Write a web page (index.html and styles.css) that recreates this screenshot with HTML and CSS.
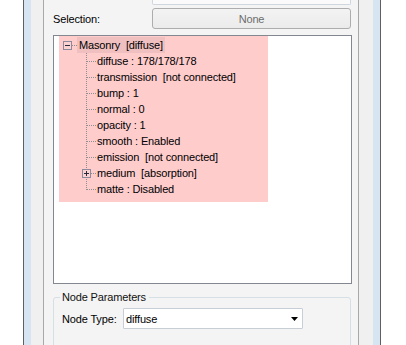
FILE: index.html
```html
<!DOCTYPE html>
<html>
<head>
<meta charset="utf-8">
<link rel="stylesheet" href="styles.css">
</head>
<body>
<div class="frame">
  <div class="rim">
    <div class="side">
      <div class="panel">
        <div class="topbox"></div>
        <div class="sel-row">
          <span class="sel-label">Selection:</span>
          <div class="btn">None</div>
        </div>
        <div class="tree">
          <div class="pink">
            <div class="row root">
              <svg class="exp" width="9" height="9" viewBox="0 0 9 9"><rect x="0.5" y="0.5" width="8" height="8" fill="#fbd2d2" stroke="#8d8a9c"/><rect x="2" y="4" width="5" height="1" fill="#2a2a3a"/></svg>
              <span class="hdots"></span>
              <span class="lbl hl">Masonry  [diffuse]</span>
            </div>
            <div class="row child"><span class="conn"></span><span class="lbl">diffuse : 178/178/178</span></div>
            <div class="row child"><span class="conn"></span><span class="lbl">transmission  [not connected]</span></div>
            <div class="row child"><span class="conn"></span><span class="lbl">bump : 1</span></div>
            <div class="row child"><span class="conn"></span><span class="lbl">normal : 0</span></div>
            <div class="row child"><span class="conn"></span><span class="lbl">opacity : 1</span></div>
            <div class="row child"><span class="conn"></span><span class="lbl">smooth : Enabled</span></div>
            <div class="row child"><span class="conn"></span><span class="lbl">emission  [not connected]</span></div>
            <div class="row child"><span class="conn"><svg class="exp" width="9" height="9" viewBox="0 0 9 9"><rect x="0.5" y="0.5" width="8" height="8" fill="#fbd2d2" stroke="#8d8a9c"/><rect x="2" y="4" width="5" height="1" fill="#2a2a3a"/><rect x="4" y="2" width="1" height="5" fill="#2a2a3a"/></svg></span><span class="lbl">medium  [absorption]</span></div>
            <div class="row child last"><span class="conn"></span><span class="lbl">matte : Disabled</span></div>
          </div>
        </div>
        <fieldset class="group">
          <legend>Node Parameters</legend>
          <div class="field">
            <span class="flabel">Node Type:</span>
            <div class="combo">
              <span class="cval">diffuse</span>
              <svg class="arrow" width="7" height="4" viewBox="0 0 7 4"><polygon points="0,0 7,0 3.5,4" fill="#000"/></svg>
            </div>
          </div>
        </fieldset>
      </div>
    </div>
  </div>
</div>
</body>
</html>
```

FILE: styles.css
```css
html, body {
  margin: 0;
  height: 345px;
  overflow: hidden;
  background: #ffffff;
}

body {
  font-family: "Liberation Sans", Arial, sans-serif;
  font-size: 11px;
  letter-spacing: -0.15px;
  color: #000;
}

.frame {
  margin-left: 23px;
  width: 358px;
  height: 345px;
  box-sizing: border-box;
  border-left: 1px solid #5f5f5f;
  border-right: 1px solid #5f5f5f;
}

.rim {
  height: 100%;
  padding: 0 7px;
  background: #d7e4f2;
}

.side {
  height: 100%;
  background: #f0f0f0;
  padding: 0 14px 0 12px;
}

.panel {
  height: 100%;
  box-sizing: border-box;
  border-left: 1px solid #a9a9a9;
  border-right: 1px solid #a9a9a9;
  background: #f4f4f4;
  padding: 0 6px 0 9px;
  display: flex;
  flex-direction: column;
  overflow: hidden;
}

.topbox {
  flex: none;
  margin-left: 99px;
  width: 199px;
  height: 5px;
  box-sizing: border-box;
  border: 1px solid #cfd6de;
  border-top: 0;
  border-radius: 0 0 2px 2px;
  background: #fafafa;
}

.sel-row {
  flex: none;
  display: flex;
  align-items: center;
  margin-top: 3px;
  height: 21px;
}

.sel-label {
  width: 99px;
  flex: none;
}

.btn {
  width: 199px;
  height: 21px;
  box-sizing: border-box;
  border: 1px solid #adadad;
  border-radius: 3px;
  background: linear-gradient(#f3f3f3, #ebebeb);
  color: #6d6d6d;
  display: flex;
  align-items: center;
  justify-content: center;
}

.tree {
  flex: none;
  margin-top: 6px;
  width: 299px;
  height: 249px;
  box-sizing: border-box;
  border: 1px solid #828790;
  background: #fff;
}

.pink {
  margin-left: 5px;
  width: 209px;
  padding: 1px 0 5px;
  background: #ffcccc;
}

.row {
  height: 16px;
  display: flex;
  align-items: center;
  white-space: pre;
}

.root {
  padding-left: 4px;
}

.exp {
  flex: none;
  display: block;
}

.hdots {
  flex: none;
  width: 5px;
  height: 1px;
  background: repeating-linear-gradient(to right, #8f8f8f 0 1px, transparent 1px 2px);
}

.lbl {
  line-height: 16px;
}

.hl {
  padding: 0 2px;
  background: #f0c0c0;
}

.child {
  padding-left: 23px;
}

.conn {
  flex: none;
  width: 15px;
  height: 16px;
  display: flex;
  align-items: center;
  background:
    repeating-linear-gradient(to bottom, #8f8f8f 0 1px, transparent 1px 2px) 4px 0 / 1px 16px no-repeat,
    repeating-linear-gradient(to right, #8f8f8f 0 1px, transparent 1px 2px) 5px 8px / 9px 1px no-repeat;
}

.last .conn {
  background:
    repeating-linear-gradient(to bottom, #8f8f8f 0 1px, transparent 1px 2px) 4px 0 / 1px 9px no-repeat,
    repeating-linear-gradient(to right, #8f8f8f 0 1px, transparent 1px 2px) 5px 8px / 9px 1px no-repeat;
}

.group {
  flex: none;
  margin: 7px 0 0 0;
  padding: 0 6px;
  width: 298px;
  height: 70px;
  box-sizing: border-box;
  border: 1px solid #d5dfe5;
  border-radius: 3px;
  min-inline-size: 0;
}

.group legend {
  padding: 0 3px 0 2px;
  line-height: 13px;
  color: #111;
}

.field {
  display: flex;
  align-items: center;
  margin-top: 4px;
}

.flabel {
  margin-left: 2px;
  width: 61px;
  flex: none;
}

.combo {
  width: 180px;
  height: 21px;
  box-sizing: border-box;
  border: 1px solid #c8ced6;
  border-radius: 1px;
  background: #fff;
  display: flex;
  align-items: center;
  padding: 0 2px;
}

.cval {
  flex: 1;
}

.arrow {
  flex: none;
  display: block;
  margin-right: 2px;
  margin-top: 1px;
}
```
